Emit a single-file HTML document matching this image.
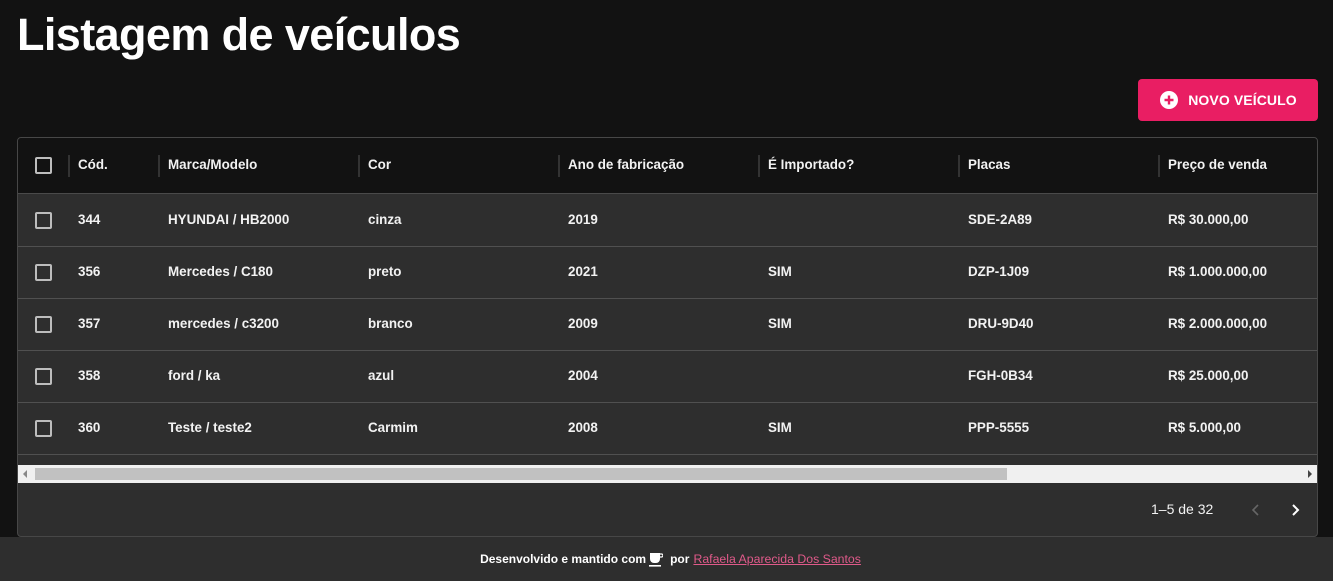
<!DOCTYPE html>
<html><head><meta charset="utf-8"><style>
*{box-sizing:border-box;margin:0;padding:0}
body{width:1333px;height:581px;background:#121212;font-family:"Liberation Sans",Arial,sans-serif;color:#fff;position:relative;overflow:hidden}
h1{position:absolute;left:17px;top:9px;font-size:45px;font-weight:bold;letter-spacing:-0.6px}
.btn{position:absolute;left:1138px;top:79px;width:180px;height:42px;background:#e91e63;border-radius:4px;display:flex;align-items:center;justify-content:center;font-size:14px;font-weight:bold;letter-spacing:.1px}
.btn svg{margin-right:9px}
.card{position:absolute;left:17px;top:137px;width:1301px;height:400px;background:#2e2e2e;border:1px solid #474747;border-radius:4px;overflow:hidden}
.hdr{position:absolute;left:0;top:0;width:100%;height:56px;background:#121212;border-bottom:1px solid #4a4a4a}
.row{position:absolute;left:0;width:100%;height:52px;border-bottom:1px solid #505050}
.c{position:absolute;top:-1px;height:100%;display:flex;align-items:center;font-size:13.4px;font-weight:bold;color:#f2f2f2}
.sep{position:absolute;top:17px;width:2px;height:22px;background:#333}
.cb{position:absolute;left:17px;width:17px;height:17px;border:2px solid #bdbdbd;border-radius:2px}
.scroll{position:absolute;left:0;top:327px;width:100%;height:18px;background:#f0f0f0}
.thumb{position:absolute;left:17px;top:3px;width:972px;height:12px;background:#c1c1c1}
.foot{position:absolute;left:0;top:537px;width:1333px;height:44px;background:#2e2e2e;font-size:12px;font-weight:bold;display:flex;align-items:center;justify-content:center;padding-left:8px}
.foot a{color:#e05a8a;text-decoration:underline;font-weight:normal;margin-left:4px;font-size:12.3px}
</style></head><body>
<h1>Listagem de veículos</h1>
<div class="btn"><svg width="20" height="20" viewBox="0 0 20 20"><circle cx="10" cy="10" r="9" fill="#fff"/><path d="M10 5.5v9M5.5 10h9" stroke="#e91e63" stroke-width="2.4"/></svg>NOVO VEÍCULO</div>
<div class="card">
<div class="hdr">
<div class="cb" style="top:19px"></div>
<div class="sep" style="left:50px"></div><div class="sep" style="left:140px"></div><div class="sep" style="left:340px"></div><div class="sep" style="left:540px"></div><div class="sep" style="left:740px"></div><div class="sep" style="left:940px"></div><div class="sep" style="left:1140px"></div>
<div class="c" style="left:60px">Cód.</div><div class="c" style="left:150px">Marca/Modelo</div><div class="c" style="left:350px">Cor</div><div class="c" style="left:550px">Ano de fabricação</div><div class="c" style="left:750px">É Importado?</div><div class="c" style="left:950px">Placas</div><div class="c" style="left:1150px">Preço de venda</div>
</div>
<div class="row" style="top:57px"><div class="cb" style="top:17px"></div><div class="c" style="left:60px">344</div><div class="c" style="left:150px">HYUNDAI / HB2000</div><div class="c" style="left:350px">cinza</div><div class="c" style="left:550px">2019</div><div class="c" style="left:750px"></div><div class="c" style="left:950px">SDE-2A89</div><div class="c" style="left:1150px">R$ 30.000,00</div></div>
<div class="row" style="top:109px"><div class="cb" style="top:17px"></div><div class="c" style="left:60px">356</div><div class="c" style="left:150px">Mercedes / C180</div><div class="c" style="left:350px">preto</div><div class="c" style="left:550px">2021</div><div class="c" style="left:750px">SIM</div><div class="c" style="left:950px">DZP-1J09</div><div class="c" style="left:1150px">R$ 1.000.000,00</div></div>
<div class="row" style="top:161px"><div class="cb" style="top:17px"></div><div class="c" style="left:60px">357</div><div class="c" style="left:150px">mercedes / c3200</div><div class="c" style="left:350px">branco</div><div class="c" style="left:550px">2009</div><div class="c" style="left:750px">SIM</div><div class="c" style="left:950px">DRU-9D40</div><div class="c" style="left:1150px">R$ 2.000.000,00</div></div>
<div class="row" style="top:213px"><div class="cb" style="top:17px"></div><div class="c" style="left:60px">358</div><div class="c" style="left:150px">ford / ka</div><div class="c" style="left:350px">azul</div><div class="c" style="left:550px">2004</div><div class="c" style="left:750px"></div><div class="c" style="left:950px">FGH-0B34</div><div class="c" style="left:1150px">R$ 25.000,00</div></div>
<div class="row" style="top:265px"><div class="cb" style="top:17px"></div><div class="c" style="left:60px">360</div><div class="c" style="left:150px">Teste / teste2</div><div class="c" style="left:350px">Carmim</div><div class="c" style="left:550px">2008</div><div class="c" style="left:750px">SIM</div><div class="c" style="left:950px">PPP-5555</div><div class="c" style="left:1150px">R$ 5.000,00</div></div>
<div class="scroll"><div class="thumb"></div><div style="position:absolute;left:5px;top:5px;border:4px solid transparent;border-right:4px solid #888;border-left:0"></div><div style="position:absolute;right:5px;top:5px;border:4px solid transparent;border-left:4px solid #444;border-right:0"></div></div>
<div class="c" style="left:1133px;top:350px;height:42px;font-weight:normal;font-size:14px">1–5 de 32</div>
<svg style="position:absolute;left:1230px;top:364px" width="16" height="16" viewBox="0 0 16 16"><path d="M10 3L5 8l5 5" stroke="#666" stroke-width="1.6" fill="none"/></svg>
<svg style="position:absolute;left:1269px;top:364px" width="16" height="16" viewBox="0 0 16 16"><path d="M6 3l5 5-5 5" stroke="#fff" stroke-width="2" fill="none"/></svg>
</div>
<div class="foot">Desenvolvido e mantido com&nbsp;<svg width="14" height="16" viewBox="0 0 14 16"><path d="M1 2h10v6a4 4 0 0 1-4 4H5a4 4 0 0 1-4-4z" fill="#fff"/><path d="M11 3h1.5a1.5 1.5 0 0 1 0 3H11" stroke="#fff" fill="none" stroke-width="1.3"/><rect x="0" y="14" width="12" height="1.6" fill="#fff"/></svg>&nbsp;&nbsp;por<a>Rafaela Aparecida Dos Santos</a></div>
</body></html>
